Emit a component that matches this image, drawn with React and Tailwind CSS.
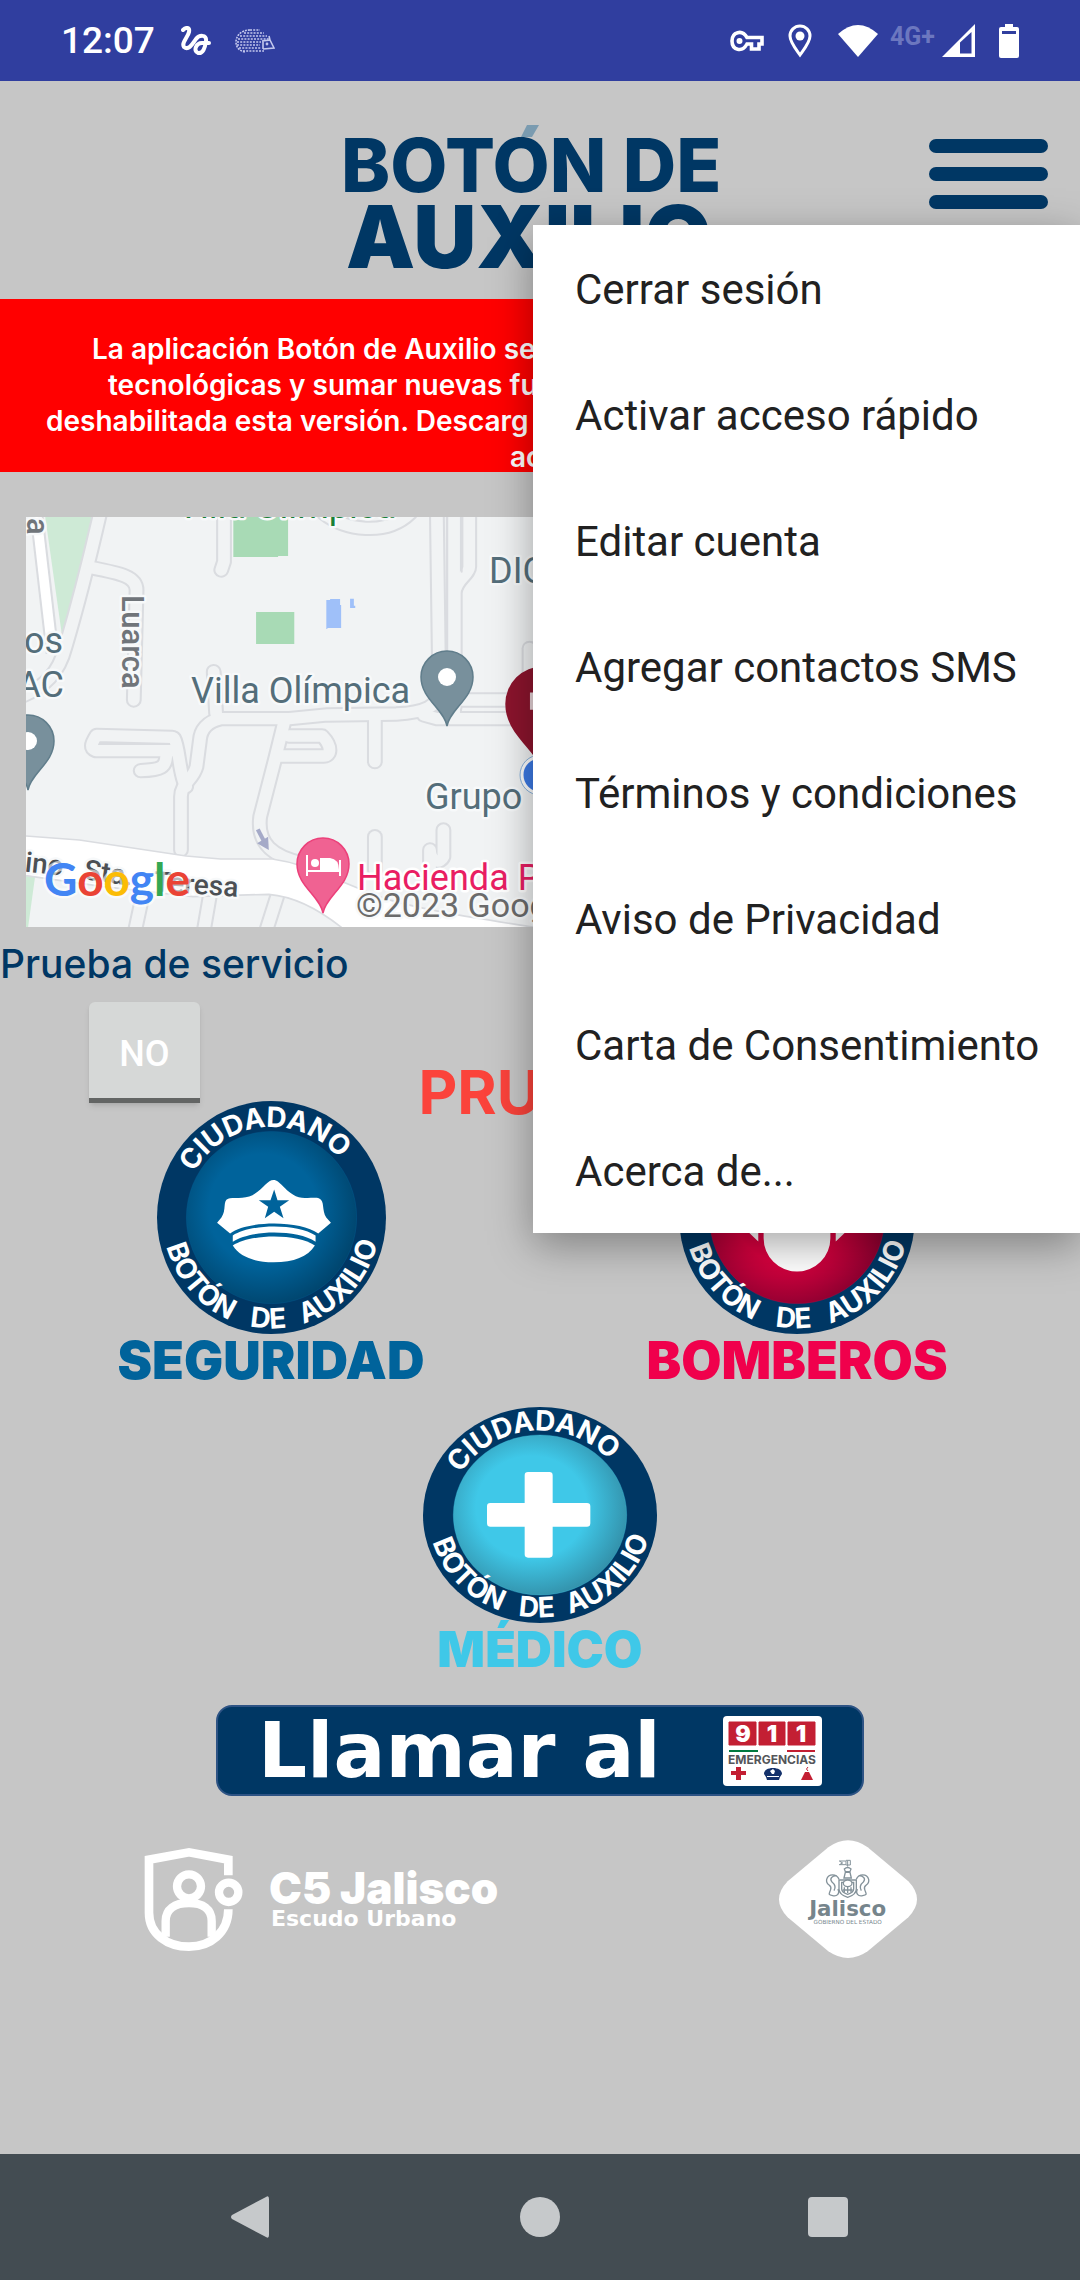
import React from "react";

const menuItems = [
  "Cerrar sesión",
  "Activar acceso rápido",
  "Editar cuenta",
  "Agregar contactos SMS",
  "Términos y condiciones",
  "Aviso de Privacidad",
  "Carta de Consentimiento",
  "Acerca de...",
];

function Hedgehog() {
  const rows = [
    [250, 260, 1], [244, 264, 4], [240, 267, 7], [238, 269, 10], [237, 261, 13], [237, 260, 16], [239, 261, 19], [243, 264, 22],
  ];
  return (
    <svg viewBox="235 0 40 24" className="h-6 w-10" fill="none" stroke="#c3c8ee" strokeWidth="1.6">
      {rows.map(([a, b, y]) => (
        <path key={y} d={`M${a} ${y}H${b}`} strokeDasharray="2 1.2" />
      ))}
      <path d="M250 1C241 1 236 7 236 13c0 6 4 9 9 10" strokeDasharray="2 1" />
      <path d="M262 12l8-1-1-4M270 11l4 8-11 1M263 12v8" />
      <circle cx="267" cy="15" r="0.6" />
    </svg>
  );
}

function StatusBar() {
  return (
    <div className="flex h-[81px] shrink-0 items-center bg-[#303e9f] pl-[61px] pr-[61px] text-white">
      <span className="font-['Roboto',sans-serif] text-[37px] font-medium leading-none">12:07</span>
      <div className="ml-[26px] flex items-center gap-6">
        <svg viewBox="0 0 30 30" className="h-[30px] w-[30px]" fill="none" stroke="white" strokeWidth="4" strokeLinecap="round" strokeLinejoin="round">
          <path d="M2 4C5 1 9 1 8 6C7 11 0 17 3 21C8 25 12 17 15 13C18 9 26 8 25 15C24 22 22 28 17 27C12 25 15 17 21 17L28 17" />
        </svg>
        <Hedgehog />
      </div>
      <div className="ml-auto flex items-center">
        <svg viewBox="0 0 34 22" className="h-[22px] w-[34px]" fill="none" stroke="white" strokeWidth="3.600">
          <path d="M17 7.500H32V14H29V19H21.500V14H17C12 23 2 20 2 11C2 2 12 -1 17 7.500Z" />
          <circle cx="9.500" cy="11" r="2" fill="white" strokeWidth="2" />
        </svg>
        <svg viewBox="0 0 24 34" className="ml-6 h-[34px] w-6" fill="none" stroke="white" strokeWidth="3">
          <path d="M12 31C7 24 2 18 2 12a10 10 0 0 1 20 0C22 18 17 24 12 31Z" />
          <circle cx="12" cy="12" r="4.500" fill="white" stroke="none" />
        </svg>
        <svg viewBox="0 0 40 32" className="ml-[26px] h-8 w-10" fill="white">
          <path d="M0 9Q20 -9 40 9L20 32Z" />
        </svg>
        <span className="ml-3 self-start font-['Roboto',sans-serif] text-[25px] font-bold leading-none text-[#6c77bf]">4G+</span>
        <svg viewBox="0 0 33 33" className="ml-[7px] h-[33px] w-[33px]">
          <path d="M0 33L33 0V33Z" fill="white" />
          <path d="M18 18.500L29.500 8V29.500H18Z" fill="#303e9f" />
        </svg>
        <svg viewBox="0 0 20 34" className="ml-6 h-[34px] w-5">
          <path d="M6 0H14V3H18Q20 3 20 5V32Q20 34 18 34H2Q0 34 0 32V5Q0 3 2 3H6Z" fill="white" />
          <path d="M3 7H17V10H3Z" fill="#303e9f" />
        </svg>
      </div>
    </div>
  );
}

function AppLogo() {
  return (
    <svg viewBox="0 0 380 152" className="h-[152px] w-[380px] overflow-visible" role="img" aria-label="Botón de Auxilio">
      <g fill="#003764" fontFamily="Inter, sans-serif">
        <text x="-5" y="72" fontSize="74" fontWeight="800">BOTÓN DE</text>
        <text x="0" y="148" fontSize="87" fontWeight="900">AUXILIO</text>
      </g>
      <path d="M160 -6H215V17H160Z" fill="#c6c6c6" />
      <path d="M181 5H193L186 17H175Z" fill="#7a9bb0" />
    </svg>
  );
}

function Pin({ x, y, fill, stroke, children }) {
  return (
    <g transform={`translate(${x} ${y})`}>
      <path d="M0 49C-3 32 -26 22 -26 0A26 26 0 0 1 26 0C26 22 3 32 0 49Z" fill={fill} stroke={stroke} strokeWidth="1.500" />
      {children || <circle r="9" fill="white" />}
    </g>
  );
}

const roads = [
  "M290 40C270 130 230 300 190 440C170 520 130 560 60 590",
  "M265 203C350 220 396 230 396 270L388 600",
  "M650 40V185L642 210",
  "M620 515L627 640",
  "M1268 40L1275 570C1275 620 1230 638 1150 642L950 645L840 656L640 656C600 665 582 690 580 720L570 800C560 840 525 850 525 890V1050",
  "M1318 40V650",
  "M1362 40V200C1362 225 1320 240 1320 280V620",
  "M500 712L280 706C262 735 262 745 278 752H510",
  "M505 715C520 740 520 830 540 860",
  "M482 770C480 800 470 810 408 812",
  "M825 665L800 770L755 950C745 1030 790 1070 880 1090",
  "M838 708H935C965 740 960 768 940 768H810",
  "M1088 660V785",
  "M1088 1010V1110",
  "M1287 990V1070C1280 1090 1250 1090 1248 1050V1130",
  "M1230 645L1268 656H1490",
  "M1340 600H1490",
  "M1537 445V520",
  "M940 40C1000 90 1120 110 1190 40",
  "M415 1180L390 1300",
  "M610 1180L590 1300",
  "M810 1170L770 1300",
];

function Map() {
  return (
    <svg viewBox="0 0 1028 410" preserveAspectRatio="xMinYMin slice" className="h-[410px] w-full bg-[#f1f3f4]" role="img" aria-label="Mapa">
      <g transform="scale(0.3444 0.3333) translate(-75 -51)">
        <path d="M130 45H275L180 410Z" fill="#ceead6" />
        <path d="M75 1125H102L80 1290H75Z" fill="#ceead6" />
        <g fill="none" strokeLinecap="round" strokeLinejoin="round">
          {roads.map((d) => (
            <path key={d} d={d} stroke="#dadce0" strokeWidth="46" />
          ))}
          {roads.map((d) => (
            <path key={d} d={d} stroke="#f1f3f4" strokeWidth="34" />
          ))}
          <path d="M1297 40V450M1340 40V215" stroke="#dadce0" strokeWidth="6" />
        </g>
        <path d="M105 40L152 460" stroke="#dadce0" strokeWidth="40" />
        <path d="M105 40L152 460" stroke="#ffffff" strokeWidth="28" />
        <path d="M677 45H836V168H807V171H677ZM743 336H854V432H743Z" fill="#a8dab5" />
        <path d="M947 300H958V297H987V315H990V384H950V387H947ZM1016 296H1027V317H1031V324H1016Z" fill="#9fc0f9" />
        <path d="M60 1007L230 1020L540 1068L640 1077H790C880 1090 930 1120 1100 1190C1200 1225 1350 1250 1600 1290L1400 1290L1000 1290C930 1230 860 1190 780 1183L560 1190L300 1160L60 1125Z" fill="#ffffff" stroke="#dadce0" strokeWidth="5" />
        <path d="M748 988L768 1028" stroke="#a5aac8" strokeWidth="12" />
        <path d="M746 1030L780 1050L778 1010Z" fill="#a5aac8" />
      </g>
      <g fontFamily="Roboto, sans-serif" stroke="#f7f9fa" strokeWidth="5" strokeLinejoin="round" paintOrder="stroke">
        <g fontSize="36" fill="#546e7a">
          <text x="151" y="1" fill="#188038">Villa Olímpica</text>
          <text x="165" y="186">Villa Olímpica</text>
          <text x="399" y="292">Grupo</text>
          <text x="463" y="66">DIC</text>
          <text x="37" y="136" textAnchor="end">os</text>
          <text x="38" y="180" textAnchor="end">AC</text>
        </g>
        <g fontWeight="500" fill="#70757a">
          <text transform="translate(96 78) rotate(90)" fontSize="31">Luarca</text>
          <text transform="translate(1 1) rotate(90)" fontSize="31">a</text>
        </g>
        <g fontSize="28" fontWeight="500" fill="#4b4f54">
          <text transform="translate(-26 352) rotate(6)">mino</text>
          <text transform="translate(57 362) rotate(8)">Sta.</text>
          <text transform="translate(127 374) rotate(4)">Teresa</text>
        </g>
        <text x="331" y="373" fontSize="36" fill="#e91e63" stroke="#ffffff">Hacienda P</text>
        <text x="330" y="400" fontSize="34" fill="#6b6b6b">©2023 Google</text>
      </g>
      <text x="18" y="379" fontFamily="Lato, sans-serif" fontSize="46" fontWeight="700" stroke="#ffffff" strokeOpacity="0.6" strokeWidth="5" paintOrder="stroke">
        <tspan fill="#4285f4">G</tspan>
        <tspan fill="#ea4335">o</tspan>
        <tspan fill="#fbbc05">o</tspan>
        <tspan fill="#4285f4">g</tspan>
        <tspan fill="#34a853">l</tspan>
        <tspan fill="#ea4335">e</tspan>
      </text>
      <Pin x={421} y={160} fill="#78909c" stroke="#607d8b" />
      <Pin x={2} y={224} fill="#78909c" stroke="#607d8b" />
      <Pin x={297} y={347} fill="#f06292" stroke="#ec407a">
        <path d="M-16 -9V12M-16 7H17M17 12V-4" stroke="white" strokeWidth="2" fill="none" />
        <path d="M-3 6V-6H7Q16 -5 16 6Z" fill="white" />
        <circle cx="-8" cy="-1" r="4" fill="white" />
      </Pin>
      <g transform="translate(517 187) scale(1.450)">
        <path d="M0 49C-3 32 -26 22 -26 0A26 26 0 0 1 26 0C26 22 3 32 0 49Z" fill="#8c142d" />
        <path d="M-9 -8H10V10H-6V4H-9Z" fill="#e8d5d9" />
      </g>
      <circle cx="514" cy="258" r="18" fill="#3d7be6" stroke="white" strokeWidth="3" />
      <circle cx="514" cy="258" r="20" fill="none" stroke="#8db6e0" strokeWidth="1" />
    </svg>
  );
}

function Badge({ id, rx, ry, inner, light, dark, className, children }) {
  const [ix, iy] = inner;
  return (
    <svg viewBox={`${-rx} ${-ry} ${rx * 2} ${ry * 2}`} className={className} aria-hidden="true">
      <defs>
        <radialGradient id={`${id}-fill`} cx="0.45" cy="0.45" r="0.58">
          <stop offset="0.55" stopColor={light} />
          <stop offset="1" stopColor={dark} />
        </radialGradient>
        <path id={`${id}-top`} d={`M${-ix - 13} 0A${ix + 13} ${iy + 13} 0 0 1 ${ix + 13} 0`} />
        <path id={`${id}-bottom`} d={`M${17 - rx} 0A${rx - 17} ${ry - 17} 0 0 0 ${rx - 17} 0`} />
      </defs>
      <ellipse rx={rx} ry={ry} fill="#003764" />
      <ellipse rx={ix} ry={iy} fill={`url(#${id}-fill)`} stroke={light} strokeWidth="2" strokeOpacity="0.500" />
      <g fill="white" fontFamily="Inter, sans-serif" fontWeight="700" fontSize="84" textAnchor="middle">
        <text><textPath href={`#${id}-top`} startOffset="47%">CIUDADANO</textPath></text>
        <text><textPath href={`#${id}-bottom`} startOffset="23%">BOTÓN</textPath></text>
        <text><textPath href={`#${id}-bottom`} startOffset="49%">DE</textPath></text>
        <text><textPath href={`#${id}-bottom`} startOffset="76%">AUXILIO</textPath></text>
      </g>
      {children}
    </svg>
  );
}

function PoliceCap() {
  return (
    <g transform="translate(-512 -412)">
      <g fill="white">
        <path d="M518 300C500 300 490 325 455 345C430 358 395 350 382 356C365 362 378 390 362 412L349 428L388 460C440 420 600 420 652 460L690 428L676 412C662 390 672 362 655 355C640 350 610 358 585 348C550 332 538 300 518 300Z" />
        <path d="M396 466C450 430 590 430 644 466V485C590 448 450 448 396 485Z" />
        <path d="M396 496C450 460 590 460 642 496C620 530 580 546 518 546C460 546 418 530 396 496Z" />
      </g>
      <path d="M520 328L530 360H565L537 380L548 414L520 395L492 414L502 380L474 360H509Z" fill="#00639b" />
    </g>
  );
}

function Emergency911() {
  return (
    <svg viewBox="0 0 99 70" className="h-[70px] w-[99px]" role="img" aria-label="911 Emergencias">
      <rect width="99" height="70" rx="4" fill="white" />
      <path d="M6 6H33V29H6ZM36 6H62V29H36ZM65 6H92V29H65Z" fill="#c31f33" stroke="#c31f33" />
      <g fill="white" fontFamily="Inter, sans-serif" fontWeight="900" fontSize="23" textAnchor="middle">
        <text x="20" y="26">9</text>
        <text x="49" y="26">1</text>
        <text x="78" y="26">1</text>
      </g>
      <path d="M6 34H35V36H6Z" fill="#00793f" />
      <path d="M64 34H92V36H64Z" fill="#c31f33" />
      <text x="49" y="48" fill="#54565a" fontFamily="Inter, sans-serif" fontWeight="700" fontSize="12" textAnchor="middle">EMERGENCIAS</text>
      <path d="M13 51H18V55H23V59H18V64H13V59H8V55H13Z" fill="#c31f33" />
      <path d="M50 52C55 52 59 54 59 58L57 61L56 64H44L43 61L41 58C41 54 45 52 50 52Z" fill="#14316b" />
      <path d="M50 53L52 55L51 58H49L47 55ZM44 60H56V61H44Z" fill="white" />
      <path d="M82 56H86L88 60L90 64H78L80 60Z" fill="#c31f33" />
      <path d="M85 51Q82 53 85 55" stroke="#c31f33" fill="none" />
    </svg>
  );
}

function Shield() {
  return (
    <svg viewBox="70 80 306 321" className="h-[107px] w-[102px]" fill="none" stroke="white" aria-hidden="true">
      <path d="M326 168V121L208 99L88 121V280C88 345 144 382 208 382C272 382 326 340 326 270" strokeWidth="26" />
      <circle cx="208" cy="201" r="36" strokeWidth="25" />
      <path d="M138 352V305C138 270 165 251 208 251C250 251 276 270 276 305V352" strokeWidth="25" />
      <circle cx="327" cy="219" r="29" strokeWidth="25" />
    </svg>
  );
}

function JaliscoLogo() {
  return (
    <svg viewBox="117 58 414 354" className="h-[118px] w-[138px]" role="img" aria-label="Jalisco, Gobierno del Estado">
      <path d="M265 80Q324 38 383 80L505 182Q557 236 505 290L383 392Q324 432 265 392L143 290Q91 236 143 182Z" fill="white" />
      <g fill="none" stroke="#84929a" strokeWidth="4">
        <path d="M297 178H349V205Q349 222 323 230Q297 222 297 205Z" />
        <path d="M305 185H341V205Q341 215 323 221Q305 215 305 205Z" />
        <ellipse cx="323" cy="188" rx="13" ry="10" fill="white" />
        <path d="M313 200V215M323 198V217M333 200V215M308 208H338" />
        <path d="M297 176C290 158 265 158 260 176C256 196 278 190 272 206C268 220 262 222 278 225C292 228 300 218 294 205M290 165C275 165 268 175 276 184C286 192 288 200 282 210" />
        <path d="M349 176C356 158 381 158 386 176C390 196 368 190 374 206C378 220 384 222 368 225C354 228 346 218 352 205M356 165C371 165 378 175 370 184C360 192 358 200 364 210" />
        <path d="M312 172L316 155H330L334 172ZM313 145Q323 136 333 145L330 153H316Z" />
        <path d="M323 138V120M298 121L308 127L298 132H318V121ZM318 119H331V133H318" strokeWidth="3" />
      </g>
      <g fill="#76858c" textAnchor="middle" fontFamily="'DejaVu Sans', sans-serif">
        <text x="323" y="285" fontSize="64" fontWeight="700">Jalisco</text>
        <text x="323" y="309" fontSize="17">GOBIERNO DEL ESTADO</text>
      </g>
    </svg>
  );
}

export default function App() {
  return (
    <div className="relative flex min-h-screen flex-col overflow-hidden bg-[#c6c6c6] font-['Inter',sans-serif]">
      <StatusBar />

      <header className="grid h-[218px] grid-cols-[1fr_auto_1fr] items-start pl-6 pr-8 pt-[39px]">
        <h1 className="col-start-2"><AppLogo /></h1>
        <button type="button" aria-label="Menú" aria-expanded="true" className="mt-[19px] flex w-[119px] flex-col gap-3.5 justify-self-end">
          <span className="h-3.5 w-full rounded-full bg-[#003764]" />
          <span className="h-3.5 w-full rounded-full bg-[#003764]" />
          <span className="h-3.5 w-full rounded-full bg-[#003764]" />
        </button>
      </header>

      <p className="h-[173px] overflow-hidden whitespace-nowrap bg-[#ff0000] pt-8 text-[28px] font-semibold leading-9 text-white">
        <span className="block pl-[92px]">La aplicación Botón de Auxilio se</span>
        <span className="block pl-[108px]">tecnológicas y sumar nuevas fu</span>
        <span className="block pl-[46px]">deshabilitada esta versión. Descarg</span>
        <span className="block pl-[510px]">ac</span>
      </p>

      <main className="flex flex-1 flex-col">
        <div className="mt-[45px] px-[26px]"><Map /></div>

        <h2 className="mt-[13px] text-[39px] font-medium leading-[48px] text-[#003764]">Prueba de servicio</h2>
        <div className="mt-3.5 grid h-[99px]">
          <button type="button" className="col-start-1 row-start-1 ml-[89px] h-[101px] w-[111px] rounded-t-md border-b-[5px] border-[#636564] bg-[#d6d8d7] pt-2 font-['Roboto',sans-serif] text-[36px] font-medium text-white shadow-md">NO</button>
          <strong className="col-start-1 row-start-1 -mb-[17px] self-end justify-self-center text-[60px] font-bold leading-[56px] text-[#fb433b]">PRUEBA</strong>
        </div>

        <div className="grid grid-cols-2 pl-2 pr-5">
          <button type="button" className="flex flex-col items-center text-[52px] font-black leading-[48px] text-[#00639b]">
            <Badge id="seguridad" rx={343} ry={349} inner={[255, 258]} light="#00639b" dark="#00446c" className="mb-[3px] h-[233px] w-[229px]">
              <PoliceCap />
            </Badge>
            SEGURIDAD
          </button>
          <button type="button" className="flex flex-col items-center text-[52px] font-black leading-[48px] text-[#f0004c]">
            <Badge id="bomberos" rx={353} ry={349} inner={[262, 258]} light="#d9003f" dark="#8d0030" className="mb-[3px] h-[233px] w-[236px]">
              <path d="M-100 -80A100 100 0 0 1 100 -80V62A100 100 0 0 1 -100 62ZM-160 30L-116 0V72ZM160 30L116 0V72Z" fill="white" />
            </Badge>
            BOMBEROS
          </button>
        </div>
        <button type="button" className="mx-auto mt-[22px] flex flex-col items-center text-[50px] font-black leading-[48px] text-[#3fc8e8]">
          <Badge id="medico" rx={351} ry={324} inner={[260, 240]} light="#3fc8e8" dark="#338fa8" className="mb-[2px] h-[216px] w-[234px]">
            <path d="M-46 -119Q-46 -129 -36 -129H28Q38 -129 38 -119V-36H141Q151 -36 151 -26V25Q151 35 141 35H38V118Q38 128 28 128H-36Q-46 128 -46 118V35H-149Q-159 35 -159 25V-26Q-159 -36 -149 -36H-46Z" fill="white" />
          </Badge>
          MÉDICO
        </button>

        <a href="tel:911" className="mx-auto mt-8 flex h-[91px] w-3/5 items-center justify-between rounded-2xl border-2 border-[#2d5384] bg-[#003764] pl-10 pr-10 font-['DejaVu_Sans',sans-serif] text-[77px] font-bold leading-none text-white">
          Llamar al
          <Emergency911 />
        </a>

        <footer className="mt-11 flex items-center justify-between pl-[143px] pr-[163px]">
          <div className="flex items-center gap-6 text-white">
            <Shield />
            <div>
              <div className="text-[44px] font-black leading-10">C5 Jalisco</div>
              <div className="pl-0.5 font-['DejaVu_Sans',sans-serif] text-[22px] font-bold leading-[22px]">Escudo Urbano</div>
            </div>
          </div>
          <JaliscoLogo />
        </footer>
      </main>

      <ul className="absolute right-0 top-[225px] w-[547px] bg-white shadow-[0_12px_40px_rgba(0,0,0,0.350)]" role="menu">
        {menuItems.map((label) => (
          <li key={label} role="none">
            <button type="button" role="menuitem" className="flex h-[126px] w-full items-center pl-[42px] pt-0.5 text-left font-['Roboto',sans-serif] text-[42px] text-[#212121]">{label}</button>
          </li>
        ))}
      </ul>

      <nav className="grid h-[126px] shrink-0 grid-cols-[repeat(3,288px)] place-items-center justify-center bg-[#434c52]">
        <button type="button" aria-label="Atrás" className="pr-1">
          <svg viewBox="0 0 40 44" className="h-11 w-10" fill="#c6c9cb"><path d="M36 2Q39 0 39 4V40Q39 44 36 42L2 24Q0 22 2 20Z" /></svg>
        </button>
        <button type="button" aria-label="Inicio" className="h-10 w-10 rounded-full bg-[#c6c9cb]" />
        <button type="button" aria-label="Recientes" className="h-10 w-10 rounded-sm bg-[#c6c9cb]" />
      </nav>
    </div>
  );
}
